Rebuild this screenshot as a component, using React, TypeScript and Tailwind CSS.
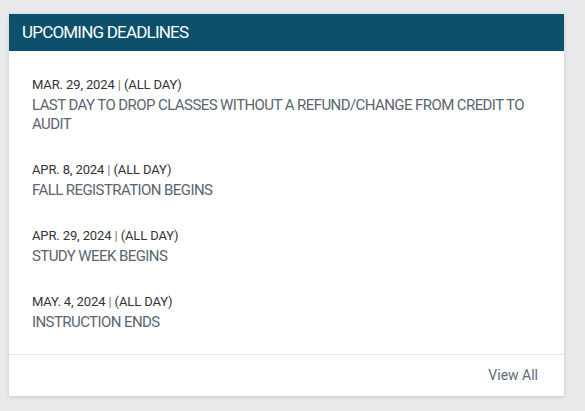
import React from "react";

const deadlines = [
  { date: "MAR. 29, 2024", title: "LAST DAY TO DROP CLASSES WITHOUT A REFUND/CHANGE FROM CREDIT TO AUDIT" },
  { date: "APR. 8, 2024", title: "FALL REGISTRATION BEGINS" },
  { date: "APR. 29, 2024", title: "STUDY WEEK BEGINS" },
  { date: "MAY. 4, 2024", title: "INSTRUCTION ENDS" },
];

export default function App() {
  return (
    <div className="min-h-[411px] w-[585px] bg-[#e9eaec] pl-[9px] pr-[21px] pt-[14px] font-['Roboto',sans-serif]">
      <div className="bg-white shadow-[0_1px_4px_rgba(0,0,0,0.15)]">
        <div className="flex h-[37px] items-center bg-[#0c506b] px-[13px]">
          <h2 className="text-[17px] font-normal tracking-[-0.8px] text-white">UPCOMING DEADLINES</h2>
        </div>
        <ul className="flex flex-col gap-[27px] px-[23px] pb-[22px] pt-[25px]">
          {deadlines.map((d) => (
            <li key={d.date}>
              <div className="text-[13px] leading-[18px] tracking-[-0.12px] text-[#333]">
                {d.date} <span className="text-[#777]">|</span> (ALL DAY)
              </div>
              <a href="#" className="mt-[2px] block text-[15px] leading-[19px] tracking-[-0.58px] text-[#5b6570]">
                {d.title}
              </a>
            </li>
          ))}
        </ul>
        <div className="flex h-[42px] items-center justify-end border-t border-[#e5e5e5] px-[26px]">
          <a href="#" className="text-[14px] text-[#5a6b7b]">View All</a>
        </div>
      </div>
    </div>
  );
}
